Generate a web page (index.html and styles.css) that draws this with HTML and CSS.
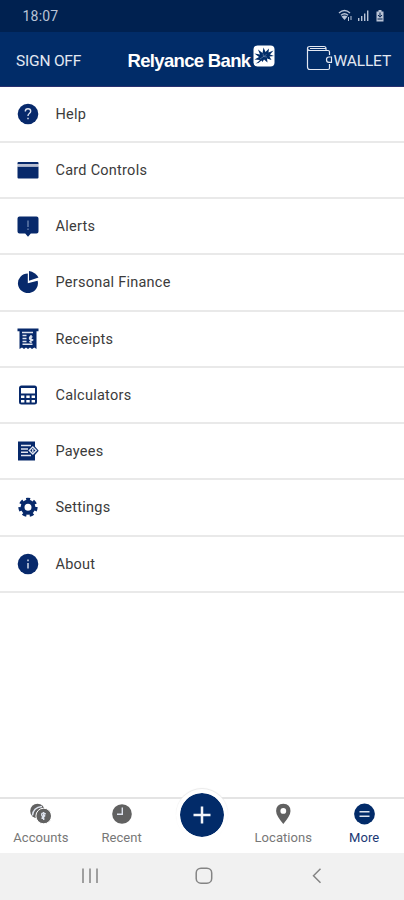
FILE: index.html
```
<!DOCTYPE html>
<html lang="en">
<head>
<meta charset="utf-8">
<title>Relyance Bank</title>
<link rel="stylesheet" href="styles.css">
</head>
<body>
<div class="app">
  <div class="status">
    <span class="time">18:07</span>
    <svg class="status-icons" width="52" height="16" viewBox="0 0 52 16">
      <g fill="none" stroke="currentColor" stroke-width="1.4">
        <path d="M3 5Q8.500 .2 14 5M5 7.200Q8.500 4.200 12 7.200"/>
        <path d="M12.500 9v4M15 8v4" stroke-width="1"/>
      </g>
      <path d="M5.500 8.500Q8.500 6.500 11.500 8.500L8.500 12Z" fill="currentColor"/>
      <path d="M22 10h1.400v3H22zM25 8h1.400v5H25zM28 5.500h1.400V13H28zM31 2.500h1.400V13H31z" fill="currentColor"/>
      <path d="M42.500 2h3v1.400h2V13.500h-7V3.400h2z" fill="currentColor"/>
      <path d="M44 4.500v4M42 7l2 2.200L46 7M41.500 11h5" fill="none" stroke="#00204f"/>
    </svg>
  </div>
  <header class="header">
    <span class="signoff">SIGN OFF</span>
    <div class="brand"><span class="brand-name">Relyance Bank</span>
      <svg width="23" height="23" viewBox="0 0 23 23">
        <rect x=".5" y=".5" width="21" height="21" rx="4" fill="#fff"/>
        <path d="M2.500 18.500Q5 17.500 7 15L1.500 14.500L6 12L1.500 8.500L7 9.500L5 4.500L9.500 8L10.500 2.500L12.500 7L16 3.500L15.500 7.500L20.500 5.500L17 9.500L21 11L16.500 11.500L18.500 15L14 13.500L14.500 17.500L11 14.500L9.500 17L8.500 15.500Q6 18.500 2.500 18.500Z" fill="#012c68"/>
        <path d="M7 14L13.500 9.500M10.500 11.500L10 8.500M10.500 11.500L14 12" fill="none" stroke="#8fa3c4" stroke-width=".5"/>
      </svg>
    </div>
    <div class="wallet">
      <svg width="27" height="27" viewBox="0 0 27 27" fill="none" stroke="currentColor" stroke-width="1.200">
        <path d="M23.500 10V7Q23.500 5.500 22 5.500H4Q1.500 5.500 1.500 3.500T4 1.500H18Q20 1.500 20 3.500V5.500M1.500 3.500V22Q1.500 24.500 4 24.500H22Q23.500 24.500 23.500 23V19M4 3.500H20"/>
        <path d="M25.500 12H23Q20.500 12 20.500 14.700T23 17.400H25.500Z"/>
      </svg>
      <span>WALLET</span>
    </div>
  </header>
  <ul class="menu">
    <li><svg viewBox="0 0 22 22"><circle cx="11" cy="11" r="10.300"/><path class="cut" d="M8.300 8.500Q8.300 5.800 11 5.800T13.700 8.300Q13.700 9.500 12.300 10.500T11 13M11 14.800v1.500"/></svg><span>Help</span></li>
    <li><svg viewBox="0 0 22 22"><path d="M1.500 3h19q1 0 1 1v1.200H.5V4q0-1 1-1zM.5 7.600h21V18.500q0 1-1 1h-19q-1 0-1-1z"/><path d="M.5 5h21v2.600H.5z" fill="#b9bfd2"/></svg><span>Card Controls</span></li>
    <li><svg viewBox="0 0 22 22"><path d="M2.500 1.500h17q2 0 2 2v13q0 2-2 2H13.800L11 21.800L8.200 18.500H2.500q-2 0-2-2v-13q0-2 2-2z"/><path d="M11 5.500v6.500M11 13.500v1.500" fill="none" stroke="#7a90b8" stroke-width="1.200"/></svg><span>Alerts</span></li>
    <li><svg viewBox="0 0 22 22"><path d="M10.800 2.500V12.200L20.600 9.800A10 9.800 0 1 1 10.800 2.500Z"/><path d="M12 0Q18.300 1 21.500 6.500L12 9.800Z"/></svg><span>Personal Finance</span></li>
    <li><svg viewBox="0 0 22 22"><path d="M.5 0.500h21v2.800h-2V21l-2.200-1.500L15 21l-2-1.500L11 21l-2-1.500L7 21l-2-1.500L2.500 21V3.300h-2z"/><path class="cut" d="M5 4.500h11M5.500 7.500h4M5.500 10.500h4M5.500 13.500h4M5.500 16.300h10" stroke-width="1"/><path class="cut" d="M15.500 9.200Q12.500 8 12.500 10T15 11.800T12.300 13.800M14 7v8" stroke-width="1.200"/></svg><span>Receipts</span></li>
    <li><svg viewBox="0 0 22 22"><rect x="2" y="1.500" width="18" height="19" rx="2.500"/><path d="M4 4h14v5.500H4zM4 11.500h3.400v2.400H4zM9.300 11.500h3.400v2.400H9.300zM14.600 11.500H18v2.400h-3.400zM4 16h3.400v2.500H4zM9.300 16h3.400v2.500H9.300zM14.600 16H18v2.500h-3.400z" fill="#fff"/></svg><span>Calculators</span></li>
    <li><svg viewBox="0 0 22 22"><path d="M1 1.500h17v5l3.700 4.300L18 15v5.500H1z"/><path class="cut" d="M4 5.500h10M4 9h7M4 12.300h7M4 15.500h10" stroke-width="1.200"/><path class="cut" d="M12.300 10.500L15.800 7L19.300 10.500L15.800 14ZM15.800 9v3.300" stroke-width="1.200"/></svg><span>Payees</span></li>
    <li><svg viewBox="0 0 22 22"><g fill="none" stroke="#07296b"><circle cx="11" cy="11.300" r="5.500" stroke-width="4"/><circle cx="11" cy="11.300" r="8" stroke-width="3.200" stroke-dasharray="3.900 3.281" transform="rotate(-2 11 11.300)"/></g></svg><span>Settings</span></li>
    <li><svg viewBox="0 0 22 22"><circle cx="11" cy="11" r="10.300"/><path class="cut" d="M11 6.500v1.700M11 10v5.500" stroke-width="1.700"/></svg><span>About</span></li>
  </ul>
  <nav class="tabs">
    <div class="tab"><svg viewBox="0 0 22 22"><circle cx="8.500" cy="8" r="7.300"/><path class="cut" d="M3.500 12.500Q4 4.500 13 3.500" stroke-width="1"/><circle cx="14.700" cy="13" r="7.800" stroke="#fff" stroke-width="1"/><path class="cut" d="M16.700 11Q12.700 9 12.700 11.500T15 13T12.500 15.500M14.700 9v8" stroke-width="1"/></svg><span>Accounts</span></div>
    <div class="tab"><svg viewBox="0 0 22 22"><circle cx="12" cy="11" r="9.800"/><path class="cut" d="M12.300 4.500v6.800H7" stroke-width="1.100"/></svg><span>Recent</span></div>
    <div class="tab add"><div class="add-button"><svg viewBox="0 0 22 22"><path d="M11 2.500v17M2.500 11h17" fill="none" stroke="#f3f5fa" stroke-width="2.500"/></svg></div></div>
    <div class="tab"><svg viewBox="0 0 22 22"><path fill-rule="evenodd" d="M11.300 .8Q18.500 1.200 18.500 8Q18.500 12.500 11.300 21Q4.100 12.500 4.100 8Q4.100 1.200 11.300 .8ZM11.300 5a2.900 2.900 0 1 0 0 5.800a2.900 2.900 0 0 0 0-5.800Z"/></svg><span>Locations</span></div>
    <div class="tab active"><svg viewBox="0 0 22 22"><circle cx="11.500" cy="11" r="10.400"/><path class="cut" d="M6.500 8.700h10M6.500 13.300h10" stroke-width="1.500"/></svg><span>More</span></div>
  </nav>
  <div class="system">
    <svg width="18" height="18" viewBox="0 0 18 18"><path d="M2 1.500v14.500M9 1.500v14.500M16 1.500v14.500"/></svg>
    <svg width="18" height="18" viewBox="0 0 18 18"><rect x="1.200" y="1.200" width="15.500" height="15" rx="4.800"/></svg>
    <svg width="18" height="18" viewBox="0 0 18 18"><path d="M12.500 1.800L5.500 8.800L12.500 15.800"/></svg>
  </div>
</div>
</body>
</html>
```
FILE: styles.css
```
* { box-sizing: border-box; }
body { margin: 0; background: #fff; font-family: Roboto, "Liberation Sans", sans-serif; }
.app { width: 404px; height: 900px; display: flex; flex-direction: column; overflow: hidden; }
svg { display: block; flex: none; }
.status { height: 32px; padding: 0 16px 0 22.500px; display: flex; align-items: center; justify-content: space-between; background: #002150; color: #b9c4d6; }
.time { font-size: 14px; letter-spacing: .2px; }
.header { height: 54.500px; padding: 5px 13px 0 16px; display: grid; grid-template-columns: 111.500px 150px 1fr; align-items: center; background: #012c68; border-bottom: 1px solid #28306f; color: #e3e8f2; }
.signoff { font-size: 15.500px; letter-spacing: -.2px; }
.brand { display: flex; align-items: center; color: #fff; }
.brand svg { margin: -10px 0 0 1px; }
.brand-name { width: 124px; white-space: nowrap; font: bold 18.500px "Liberation Sans", sans-serif; letter-spacing: -.67px; }
.wallet { display: flex; align-items: center; justify-content: flex-end; font-size: 15.500px; letter-spacing: -.15px; }
.wallet svg { margin-top: -6px; }
.menu { flex: 1; margin: 0; padding: 0; list-style: none; }
.menu li { height: 56.250px; padding: 0 17px; display: flex; align-items: center; gap: 16.500px; border-bottom: 2px solid #e9e9e9; font-size: 14.500px; letter-spacing: .25px; color: #3b3b3b; }
.menu span { padding-top: 1px; }
.menu svg { width: 22px; height: 22px; fill: #07296b; }
.cut { fill: none; stroke: #dfe4ef; stroke-width: 1.400; }
.tabs { height: 56px; display: grid; grid-template-columns: repeat(5, 1fr); border-top: 2px solid #e4e4e4; background: #fff; }
.tab { padding-top: 4px; display: flex; flex-direction: column; align-items: center; gap: 4px; font-size: 13px; letter-spacing: .05px; line-height: 18px; color: #777; }
.tab > span { padding-left: 1px; }
.tab > svg { width: 22px; height: 22px; fill: #616161; }
.tab.active { color: #1b3975; }
.tab.active > svg { fill: #022b69; }
.tab.add { padding: 0 0 0 1px; }
.add-button { width: 52px; height: 52px; margin-top: -10px; border: 4px solid #fff; border-radius: 50%; background: #022b69; background-clip: padding-box; box-shadow: 0 -1px 1px #e9e9e9; display: flex; align-items: center; justify-content: center; }
.add-button svg { width: 22px; height: 22px; }
.system { height: 47px; padding: 0 78px 2px 81px; display: flex; align-items: center; justify-content: space-between; background: #f1f1f1; }
.system svg { fill: none; stroke: #848484; stroke-width: 1.500; }
```
